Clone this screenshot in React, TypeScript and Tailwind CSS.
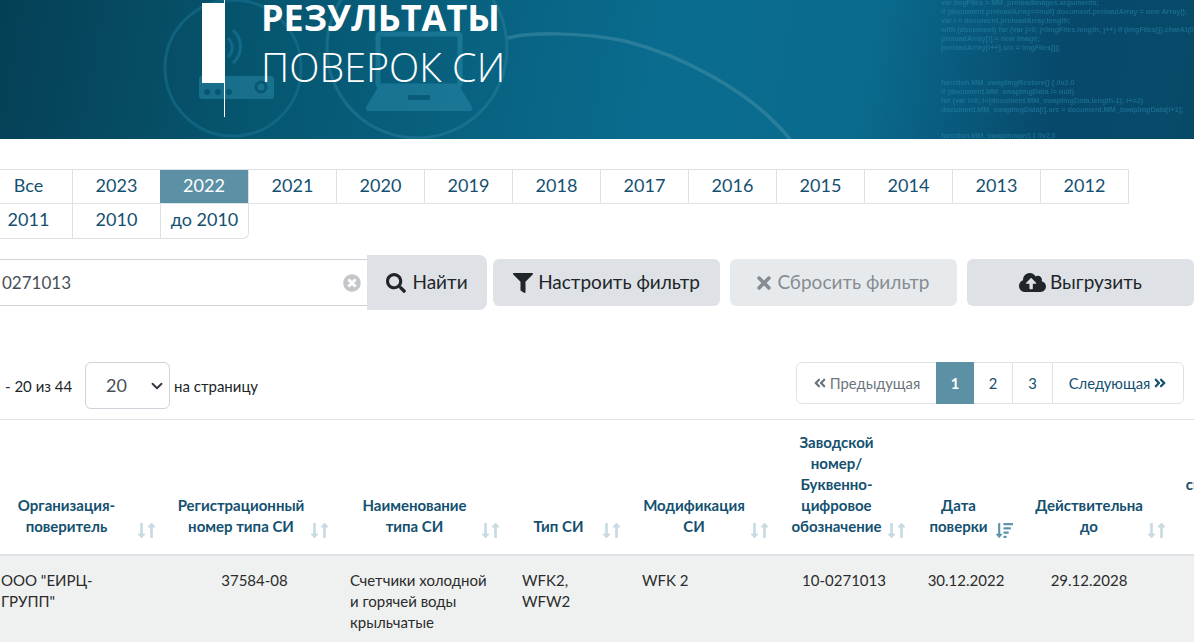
import { FaSearch, FaFilter, FaTimes, FaCloudUploadAlt, FaAngleDoubleLeft, FaAngleDoubleRight, FaLongArrowAltDown, FaLongArrowAltUp, FaSortAmountDown, FaTimesCircle } from "react-icons/fa"

const years = ["Все", "2023", "2022", "2021", "2020", "2019", "2018", "2017", "2016", "2015", "2014", "2013", "2012", "2011", "2010", "до 2010"]

const code1 = [
  "var imgFiles = MM_preloadImages.arguments;",
  "if (document.preloadArray==null) document.preloadArray = new Array();",
  "var i = document.preloadArray.length;",
  "with (document) for (var j=0; j<imgFiles.length; j++) if (imgFiles[j].charAt(0)",
  "preloadArray[i] = new Image;",
  "preloadArray[i++].src = imgFiles[j];",
]

const code2 = [
  "function MM_swapImgRestore() { //v2.0",
  "if (document.MM_swapImgData != null)",
  "for (var i=0; i<(document.MM_swapImgData.length-1); i+=2)",
  "document.MM_swapImgData[i].src = document.MM_swapImgData[i+1];",
]

const columns = [
  { label: ["Организация-", "поверитель"], width: "w-[176px]", icon: "right-[7px]", pad: "pr-[35px]" },
  { label: ["Регистрационный", "номер типа СИ"], width: "w-[175px]", icon: "right-[9px]", pad: "pr-[37px]" },
  { label: ["Наименование", "типа СИ"], width: "w-[170px]", icon: "right-[8px]", pad: "pr-[35px]" },
  { label: ["Тип СИ"], width: "w-[120px]", icon: "right-[7px]", pad: "pr-[37px]" },
  { label: ["Модификация", "СИ"], width: "w-[139px]", icon: "right-[-2px]", pad: "pr-[25px]" },
  { label: ["Заводской", "номер/", "Буквенно-", "цифровое", "обозначение"], width: "w-[146px]", icon: "right-[7px]", pad: "pr-[25px]" },
  { label: ["Дата", "поверки"], width: "w-[98px]", icon: "right-[2px]", pad: "pr-[25px]", active: true },
  { label: ["Действительна", "до"], width: "w-[148px]", icon: "right-[-7px]", pad: "pr-[10px]" },
]

function SortIcon({ className, active }: { className: string; active?: boolean }) {
  if (active) {
    return <FaSortAmountDown className={`absolute bottom-[15px] text-[17px] text-[#5f93a8] ${className}`} />
  }
  return (
    <span className={`absolute bottom-[15px] flex text-[17px] text-[#c8dae2] ${className}`}>
      <FaLongArrowAltDown className="-mr-[7px]" />
      <FaLongArrowAltUp />
    </span>
  )
}

function Banner() {
  return (
    <div className="relative h-[139px] overflow-hidden bg-[linear-gradient(100deg,#053f55_0%,#06566f_22%,#0a6c8f_55%,#0a6b8e_72%,#07496b_88%,#074a68_100%)]">
      <svg className="absolute inset-0 h-full w-full" viewBox="0 0 1194 139" fill="none">
        <g opacity="0.5">
          <circle cx="233" cy="68" r="68" stroke="#1b7596" strokeWidth="3" />
          <circle cx="417" cy="48" r="90" stroke="#2a7f9c" strokeWidth="3" />
          <path d="M228 38a13 13 0 0 1 0 19M233 30a22 22 0 0 1 0 33" stroke="#1b80a8" strokeWidth="3" />
          <rect x="199" y="76" width="75" height="23" rx="3" fill="#2a8bab" />
          <circle cx="207" cy="92" r="3" fill="#0a5b78" />
          <circle cx="218" cy="92" r="3" fill="#0a5b78" />
          <circle cx="229" cy="92" r="3" fill="#0a5b78" />
          <circle cx="261" cy="87" r="5" stroke="#0a5b78" strokeWidth="3" />
          <rect x="378" y="34" width="82" height="52" rx="2" stroke="#2a8bab" strokeWidth="5" />
          <path d="M378 87h82l12 20h-106z" fill="#2a8bab" />
          <rect x="366" y="106" width="106" height="5" rx="2" fill="#2a8bab" />
          <rect x="408" y="95" width="22" height="5" fill="#0a5b78" />
        </g>
        <path d="M508 38C530 32 580 32 625 41C680 55 750 90 790 139" stroke="#3e8ba3" strokeWidth="3.5" opacity="0.6" />
      </svg>
      <div className="absolute left-[941px] top-[-2px] whitespace-nowrap font-['Liberation_Sans',sans-serif] text-[7.2px] font-bold leading-[9px] text-[#2b8ab0] opacity-50 blur-[0.4px]">
        {code1.map((line) => <div key={line}>{line}</div>)}
        <div className="mt-[26px]">
          {code2.map((line) => <div key={line}>{line}</div>)}
        </div>
        <div className="mt-[17px]">{"function MM_swapImage() { //v2.0"}</div>
      </div>
      <div className="relative ml-[202px] flex h-[117px] items-start">
        <div className="mt-[3px] h-[80px] w-[22px] bg-white" />
        <div className="h-full w-px bg-white" />
        <div className="-mt-[5px] ml-[36px] font-['Open_Sans',sans-serif] leading-[46px] text-white">
          <div className="text-[36px] font-bold">РЕЗУЛЬТАТЫ</div>
          <div className="mt-[3px] text-[39.5px] font-light">ПОВЕРОК СИ</div>
        </div>
      </div>
    </div>
  )
}

function YearTabs() {
  return (
    <div className="-ml-[15px] mt-[30px] grid w-[1144px] grid-cols-13 text-[18px] leading-[31px] text-[#14506f]">
      {years.map((y, i) => (
        <div
          key={y}
          className={`h-[35px] border-b border-r border-[#dee2e6] text-center ${i < 13 ? "border-t" : ""} ${y === "2022" ? "-ml-px border-[#5b90a5] bg-[#5b90a5] text-white" : ""} ${y === "до 2010" ? "rounded-br-md" : ""}`}
        >
          {y}
        </div>
      ))}
    </div>
  )
}

function Toolbar() {
  return (
    <div className="-ml-[10px] mt-[16px] flex w-[1214px] items-center text-[19px] text-[#212529]">
      <div className="flex h-[47px] w-[377px] items-center justify-between border-y border-[#ced4da] pl-[12px] pr-[6px] text-[17px] text-[#495057]">
        <span>0271013</span>
        <FaTimesCircle className="text-[18px] text-[#c4c7c9]" />
      </div>
      <button className="flex h-[55px] w-[120px] items-center justify-center gap-[6px] rounded-r-lg bg-[#dee2e6]">
        <FaSearch className="text-[20px]" /> Найти
      </button>
      <button className="ml-[6px] flex h-[47px] w-[227px] items-center justify-center gap-[5px] rounded-md bg-[#dee2e6]">
        <FaFilter className="text-[20px]" /> Настроить фильтр
      </button>
      <button className="ml-[10px] flex h-[47px] w-[227px] items-center justify-center gap-[4px] rounded-md bg-[#e7eaed] pr-[4px] text-[#868c91]">
        <FaTimes className="text-[20px]" /> Сбросить фильтр
      </button>
      <button className="ml-[10px] flex h-[47px] w-[227px] items-center justify-center gap-[4px] rounded-md bg-[#dee2e6]">
        <FaCloudUploadAlt className="text-[27px]" /> Выгрузить
      </button>
    </div>
  )
}

function Pager() {
  return (
    <div className="mt-[52px] flex h-[47px] items-start justify-between pr-[10px] text-[15px] text-[#212529]">
      <div className="flex h-full items-center pt-[2px]">
        <span className="ml-[5px] w-[80px]">- 20 из 44</span>
        <div className="-mt-[2px] flex h-[47px] w-[85px] items-center justify-between rounded-md border border-[#ced4da] pl-[20px] pr-[6px] text-[18px] text-[#495057]">
          20
          <svg width="12" height="12" viewBox="0 0 16 16" fill="none" stroke="#343a40" strokeWidth="2.5" strokeLinecap="round" strokeLinejoin="round"><path d="m2 5 6 6 6-6" /></svg>
        </div>
        <span className="ml-[4px]">на страницу</span>
      </div>
      <div className="flex h-[42px] rounded-md border border-[#dee2e6] text-[14.8px] leading-[40px] text-[#14506f]">
        <div className="flex w-[139px] items-center justify-center gap-[3px] text-[#6c757d]"><FaAngleDoubleLeft className="text-[14px]" /> Предыдущая</div>
        <div className="-my-px h-[42px] w-[38px] bg-[#5b90a5] text-center font-bold leading-[42px] text-white">1</div>
        <div className="w-[39px] border-r border-[#dee2e6] text-center">2</div>
        <div className="w-[40px] border-r border-[#dee2e6] text-center">3</div>
        <div className="flex w-[130px] items-center justify-center gap-[3px]">Следующая <FaAngleDoubleRight className="text-[14px]" /></div>
      </div>
    </div>
  )
}

function ResultsTable() {
  return (
    <table className="-ml-[9px] mt-[10px] w-[1302px] table-fixed border-t border-[#dee2e6] text-[15px] leading-[21px]">
      <colgroup>
        {columns.map((c) => <col key={c.label[0]} className={c.width} />)}
        <col className="w-[130px]" />
      </colgroup>
      <thead>
        <tr className="border-b-2 border-[#dee2e6] text-[#14506f]">
          {columns.map((c) => (
            <th key={c.label[0]} className={`relative pb-[17px] pl-[10px] pt-[12px] text-center align-bottom font-bold ${c.pad}`}>
              {c.label.map((l) => <div key={l} className="whitespace-nowrap">{l}</div>)}
              <SortIcon className={c.icon} active={c.active} />
            </th>
          ))}
          <th className="pb-[17px] pl-[18px] text-center align-bottom font-bold">
            <div>Номер</div>
            <div>свидетельства</div>
            <div>о</div>
            <div>поверке</div>
          </th>
        </tr>
      </thead>
      <tbody>
        <tr className="h-[100px] bg-[#eff1f1] align-top text-[#2b2b2b]">
          <td className="px-[10px] pt-[14px]">ООО "ЕИРЦ-<br />ГРУПП"</td>
          <td className="px-[10px] pt-[14px] text-center">37584-08</td>
          <td className="pl-[8px] pr-[10px] pt-[14px]">Счетчики холодной<br />и горячей воды<br />крыльчатые</td>
          <td className="px-[10px] pt-[14px]">WFK2,<br />WFW2</td>
          <td className="px-[10px] pt-[14px]">WFK 2</td>
          <td className="px-[10px] pt-[14px] text-center">10-0271013</td>
          <td className="px-[10px] pt-[14px] text-center">30.12.2022</td>
          <td className="px-[10px] pt-[14px] text-center">29.12.2028</td>
          <td />
        </tr>
      </tbody>
    </table>
  )
}

export default function App() {
  return (
    <div className="h-screen overflow-hidden bg-white font-['Lato','Noto_Sans',sans-serif]">
      <Banner />
      <YearTabs />
      <Toolbar />
      <Pager />
      <ResultsTable />
    </div>
  )
}
